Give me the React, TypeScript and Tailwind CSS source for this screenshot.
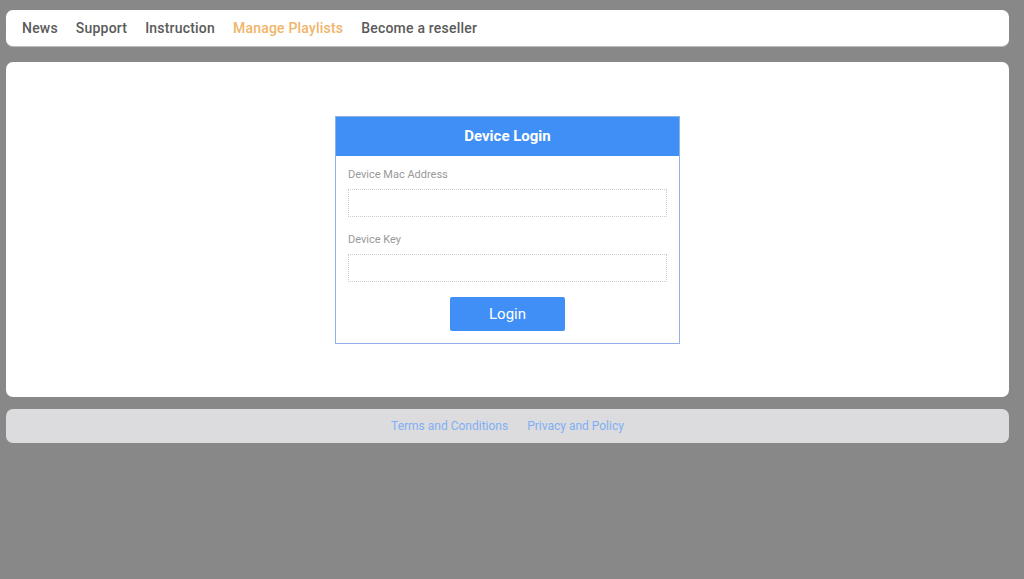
import React from "react";

export default function App() {
  return (
    <div
      className="min-h-[579px] w-full bg-[#888888] pl-[6px] pr-[15px] pt-[10px] pb-[10px]"
      style={{ fontFamily: "Roboto, 'Liberation Sans', sans-serif" }}
    >
      <nav className="flex h-[36px] items-center gap-[18px] rounded-[7px] bg-white px-[16px] text-[14px] font-medium tracking-[0.2px] text-[#5a5a5a] shadow-[0_1px_0_#bdbdbd]">
        <span>News</span>
        <span>Support</span>
        <span>Instruction</span>
        <span className="text-[#f0b56a]">Manage Playlists</span>
        <span>Become a reseller</span>
      </nav>

      <main className="mt-[16px] flex h-[335px] justify-center rounded-[7px] bg-white pt-[54px]">
        <div className="h-[228px] w-[345px] border border-[#8fb3e8] bg-white">
          <div className="flex h-[39px] items-center justify-center bg-[#3f8ff6] text-[15px] font-bold text-white">
            Device Login
          </div>
          <div className="px-[12px] pt-[12px]">
            <label className="block text-[11px] leading-[14px] text-[#999999]">Device Mac Address</label>
            <div className="mt-[7px] h-[28px] w-full border border-dotted border-[#cccccc]" />
            <label className="mt-[16px] block text-[11px] leading-[14px] text-[#999999]">Device Key</label>
            <div className="mt-[7px] h-[28px] w-full border border-dotted border-[#cccccc]" />
            <div className="mt-[15px] flex justify-center">
              <button className="flex h-[34px] w-[115px] items-center justify-center rounded-[2px] bg-[#3f8ff6] text-[15px] text-white">
                Login
              </button>
            </div>
          </div>
        </div>
      </main>

      <footer className="mt-[12px] flex h-[34px] items-center justify-center gap-[19px] rounded-[7px] bg-[#dcdcde] text-[12px] text-[#80aff4]">
        <span>Terms and Conditions</span>
        <span>Privacy and Policy</span>
      </footer>
    </div>
  );
}
